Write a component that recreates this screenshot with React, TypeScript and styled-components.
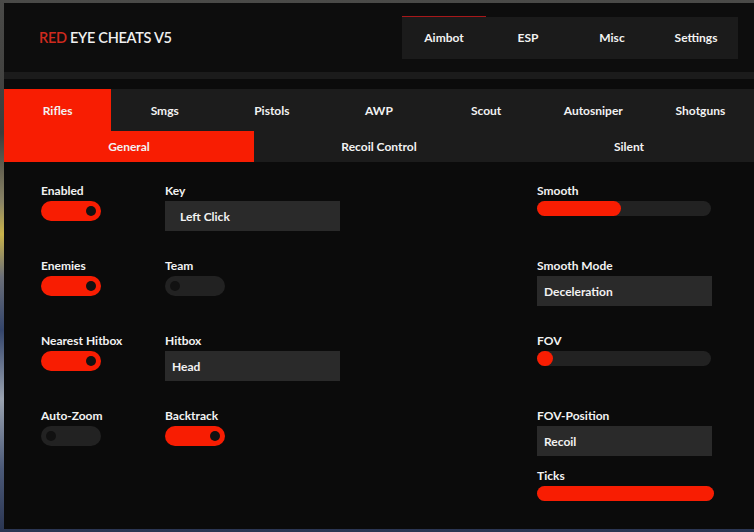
import React from "react";
import styled, { createGlobalStyle } from "styled-components";

const RED = "#f81d02";

const GlobalStyle = createGlobalStyle`
  html, body {
    margin: 0;
    padding: 0;
    width: 754px;
    height: 532px;
    overflow: hidden;
  }
  body {
    background: linear-gradient(
      180deg,
      #4a4a48 0%,
      #3d3d3b 25%,
      #8a8466 38%,
      #c9b34a 44%,
      #6b6f78 52%,
      #34456b 62%,
      #9aa3b0 75%,
      #4c5a78 88%,
      #2a3552 100%
    );
    font-family: Lato, "Open Sans", "Liberation Sans", sans-serif;
    color: #f2f2f2;
  }
`;

const Frame = styled.div`
  padding: 3px 0 3px 4px;
`;

const Shell = styled.div`
  width: 750px;
  height: 526px;
  background: #0b0b0b;
  display: flex;
  flex-direction: column;
`;

const Header = styled.header`
  height: 69px;
  background: #0d0d0d;
  display: flex;
  align-items: center;
  padding: 0 16px 0 35px;
`;

const Title = styled.h1`
  margin: 0;
  font-size: 14.5px;
  font-weight: 600;
  letter-spacing: -0.3px;
  color: #f0f0f0;
  span {
    color: #cf2a1e;
  }
`;

const Nav = styled.nav`
  margin-left: auto;
  display: grid;
  grid-template-columns: repeat(4, 84px);
  height: 42px;
  background: #1b1b1b;
`;

const NavItem = styled.div<{ $active?: boolean }>`
  display: flex;
  align-items: center;
  justify-content: center;
  padding-bottom: 1px;
  font-size: 12px;
  font-weight: 700;
  box-shadow: ${(p) => (p.$active ? "0 -1px 0 #a8181a" : "none")};
`;

const Stripe = styled.div`
  height: 7px;
  background: #1b1b1b;
`;

const Spacer = styled.div`
  height: 10px;
`;

const TabBar = styled.div<{ $cols: number; $h: number }>`
  display: grid;
  grid-template-columns: repeat(${(p) => p.$cols}, 1fr);
  height: ${(p) => p.$h}px;
  background: #1c1c1c;
`;

const Tab = styled.div<{ $active?: boolean }>`
  display: flex;
  align-items: center;
  justify-content: center;
  font-size: 12px;
  font-weight: 700;
  background: ${(p) => (p.$active ? RED : "transparent")};
`;

const Content = styled.main`
  display: flex;
  padding: 21px 0 0 37px;
`;

const LeftGrid = styled.div`
  display: grid;
  grid-template-columns: 124px 175px;
  grid-auto-rows: 75px;
`;

const RightCol = styled.div`
  margin-left: 197px;
  display: flex;
  flex-direction: column;
`;

const Field = styled.div<{ $h?: number }>`
  display: flex;
  flex-direction: column;
  align-items: flex-start;
  height: ${(p) => (p.$h ? `${p.$h}px` : "auto")};
`;

const Label = styled.div`
  font-size: 12px;
  font-weight: 700;
  line-height: 16px;
  margin-bottom: 2px;
  white-space: nowrap;
`;

const ToggleTrack = styled.div<{ $on: boolean }>`
  width: 60px;
  height: 20px;
  box-sizing: border-box;
  border-radius: 10px;
  padding: 0 5px;
  display: flex;
  align-items: center;
  justify-content: ${(p) => (p.$on ? "flex-end" : "flex-start")};
  background: ${(p) => (p.$on ? RED : "#222222")};
`;

const Knob = styled.div`
  width: 10px;
  height: 10px;
  border-radius: 50%;
  background: #111111;
`;

const SelectBox = styled.div<{ $pad: number }>`
  width: 175px;
  height: 30px;
  box-sizing: border-box;
  padding-left: ${(p) => p.$pad}px;
  background: #2a2a2a;
  display: flex;
  align-items: center;
  font-size: 12px;
  font-weight: 700;
`;

const Track = styled.div<{ $w: number }>`
  width: ${(p) => p.$w}px;
  height: 15px;
  border-radius: 8px;
  background: #222222;
  display: flex;
`;

const Fill = styled.div`
  min-width: 16px;
  height: 15px;
  border-radius: 8px;
  background: ${RED};
`;

const Toggle = ({ on }: { on: boolean }) => (
  <ToggleTrack $on={on}>
    <Knob />
  </ToggleTrack>
);

const Slider = ({ pct, w = 174 }: { pct: number; w?: number }) => (
  <Track $w={w}>
    <Fill style={{ width: `${pct}%` }} />
  </Track>
);

const categories = ["Rifles", "Smgs", "Pistols", "AWP", "Scout", "Autosniper", "Shotguns"];
const subs = ["General", "Recoil Control", "Silent"];
const navs = ["Aimbot", "ESP", "Misc", "Settings"];

export default function App() {
  return (
    <>
      <GlobalStyle />
      <Frame>
        <Shell>
          <Header>
            <Title>
              <span>RED</span> EYE CHEATS V5
            </Title>
            <Nav>
              {navs.map((n, i) => (
                <NavItem key={n} $active={i === 0}>
                  {n}
                </NavItem>
              ))}
            </Nav>
          </Header>
          <Stripe />
          <Spacer />
          <TabBar $cols={7} $h={42}>
            {categories.map((c, i) => (
              <Tab key={c} $active={i === 0}>
                {c}
              </Tab>
            ))}
          </TabBar>
          <TabBar $cols={3} $h={31}>
            {subs.map((s, i) => (
              <Tab key={s} $active={i === 0}>
                {s}
              </Tab>
            ))}
          </TabBar>
          <Content>
            <LeftGrid>
              <Field>
                <Label>Enabled</Label>
                <Toggle on />
              </Field>
              <Field>
                <Label>Key</Label>
                <SelectBox $pad={15}>Left Click</SelectBox>
              </Field>
              <Field>
                <Label>Enemies</Label>
                <Toggle on />
              </Field>
              <Field>
                <Label>Team</Label>
                <Toggle on={false} />
              </Field>
              <Field>
                <Label>Nearest Hitbox</Label>
                <Toggle on />
              </Field>
              <Field>
                <Label>Hitbox</Label>
                <SelectBox $pad={7}>Head</SelectBox>
              </Field>
              <Field>
                <Label>Auto-Zoom</Label>
                <Toggle on={false} />
              </Field>
              <Field>
                <Label>Backtrack</Label>
                <Toggle on />
              </Field>
            </LeftGrid>
            <RightCol>
              <Field $h={75}>
                <Label>Smooth</Label>
                <Slider pct={48} />
              </Field>
              <Field $h={75}>
                <Label>Smooth Mode</Label>
                <SelectBox $pad={7}>Deceleration</SelectBox>
              </Field>
              <Field $h={75}>
                <Label>FOV</Label>
                <Slider pct={0} />
              </Field>
              <Field $h={60}>
                <Label>FOV-Position</Label>
                <SelectBox $pad={7}>Recoil</SelectBox>
              </Field>
              <Field>
                <Label>Ticks</Label>
                <Slider pct={100} w={177} />
              </Field>
            </RightCol>
          </Content>
        </Shell>
      </Frame>
    </>
  );
}
